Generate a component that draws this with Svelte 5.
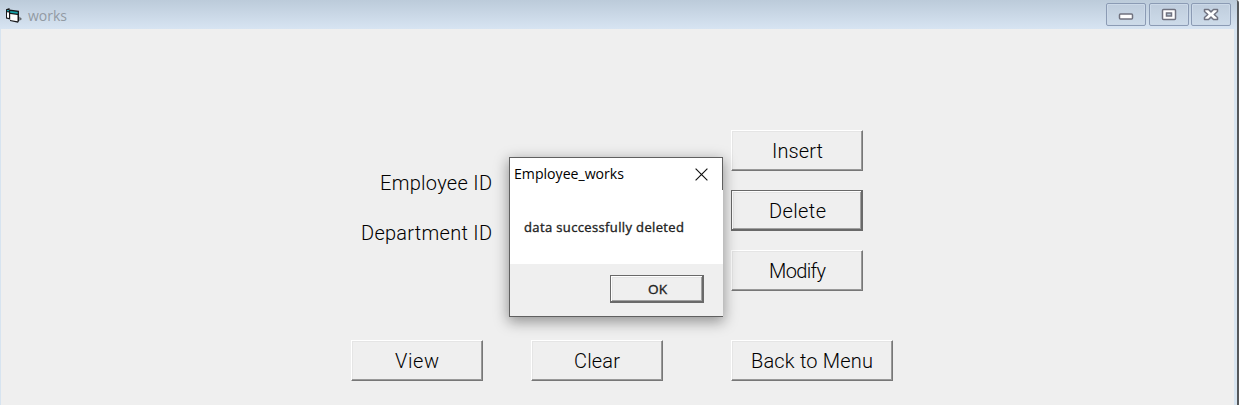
<script>
  const labels = [
    { text: 'Employee ID', width: 112 },
    { text: 'Department ID', width: 131 }
  ];
  const actions = [
    { text: 'Insert', width: 51 },
    { text: 'Delete', width: 57, active: true },
    { text: 'Modify', width: 57 }
  ];
  const footer = [
    { text: 'View', width: 44 },
    { text: 'Clear', width: 46 },
    { text: 'Back to Menu', width: 122, wide: true }
  ];
</script>

{#snippet caption(text, width)}
  <svg class="caption" width={width} height="26" viewBox={`0 0 ${width} 26`}>
    <text x="0" y="20" textLength={width}>{text}</text>
  </svg>
{/snippet}

<div class="window">
  <header>
    <svg class="app-icon" width="18" height="16" viewBox="0 0 18 16">
      <path d="M1 1.200 4.500 0v1.500L14 2.800V13l-1 1.800-8-1.700v-1.500L1 10.500z" fill="#18191b" />
      <path d="M2 4.200 4 4.600v5.500L2 9.500zM5.200 6l7.300 1v6.300L5.200 12z" fill="#fff" />
      <path d="M2 2h2v1.200H2zM5.200 3l7.500 1v1.700l-7.500-1z" fill="#16a7ad" />
      <path d="M14.300 8.500 17 11l-2.700 2z" fill="#63676c" />
    </svg>
    <span class="title">works</span>
    <div class="controls">
      <button aria-label="Minimize">
        <svg width="38" height="21" viewBox="0 0 38 21"><rect x="12.500" y="10" width="13" height="5" rx="1" fill="#fff" stroke="#70727f" stroke-width="1.500" /></svg>
      </button>
      <button aria-label="Maximize">
        <svg width="38" height="21" viewBox="0 0 38 21"><rect x="12.500" y="5.500" width="13" height="10" rx="1" fill="#fff" stroke="#70727f" stroke-width="1.500" /><rect x="16.500" y="9" width="5" height="3" fill="#b8c9d9" stroke="#70727f" stroke-width="1.500" /></svg>
      </button>
      <button aria-label="Close">
        <svg width="38" height="21" viewBox="0 0 38 21"><path d="M12.500 5.500h4l2.500 2.400 2.500-2.400h4v2l-3.300 3 3.300 3v2h-4L19 13.100l-2.500 2.400h-4v-2l3.300-3-3.300-3z" fill="#fff" stroke="#70727f" stroke-width="1.500" stroke-linejoin="round" /></svg>
      </button>
    </div>
  </header>
  <main>
    <section class="upper">
      <div class="labels">
        {#each labels as item}{@render caption(item.text, item.width)}{/each}
      </div>
      <div class="actions">
        {#each actions as item}
          <button class="key" class:active={item.active}>{@render caption(item.text, item.width)}</button>
        {/each}
      </div>
    </section>
    <section class="lower">
      {#each footer as item}
        <button class="key" class:wide={item.wide}>{@render caption(item.text, item.width)}</button>
      {/each}
    </section>
  </main>
</div>

<div class="dialog" role="dialog" aria-label="Employee_works">
  <div class="heading">
    <svg width="114" height="24" viewBox="0 0 114 24"><text x="0" y="17" textLength="110" lengthAdjust="spacingAndGlyphs">Employee_works</text></svg>
    <svg class="cross" width="13" height="13" viewBox="0 0 13 13"><path d="M.6.6 12.400 12.400M12.400.6.6 12.400" stroke="#111" stroke-width="1.15" /></svg>
  </div>
  <div class="message">
    <svg width="164" height="22" viewBox="0 0 164 22"><text x="0" y="15" textLength="160">data successfully deleted</text></svg>
  </div>
  <div class="dialog-footer">
    <button class="key active ok"><svg width="19" height="18" viewBox="0 0 19 18"><text x="0" y="13.500" textLength="19" lengthAdjust="spacingAndGlyphs">OK</text></svg></button>
  </div>
</div>

<style>
  :global(body) { margin: 0; overflow: hidden; background: #fff; }
  * { box-sizing: border-box; }
  button { padding: 0; margin: 0; border-radius: 0; }
  svg { display: block; flex: none; overflow: visible; }
  .window {
    width: 1239px; height: 405px;
    border-right: 2px solid #55585b;
    border-top-right-radius: 3px;
    background: #d7e4f0;
    overflow: hidden;
  }
  header {
    height: 29px; display: flex; align-items: flex-start;
    padding: 3px 6px 0 5px;
    background: linear-gradient(#bccbda, #d7e4f2);
  }
  .app-icon { margin-top: 5px; }
  .title { margin: 4px 0 0 5px; color: #929aa3; font: 14px/18px "Open Sans", "Noto Sans", sans-serif; }
  .controls { display: flex; gap: 3px; margin-left: auto; }
  .controls button {
    width: 40px; height: 23px;
    border: 1px solid #8b9bb4; border-radius: 2px;
    box-shadow: inset 0 0 0 1px #ccd9e8;
    background: linear-gradient(#bfcddd, #cddbe9);
  }
  .controls button:last-child { margin-left: -1px; }
  main {
    width: 1233px; height: 376px; margin-left: 1px;
    background: #efefef; padding-top: 101px;
  }
  .upper { display: flex; height: 210px; }
  .labels {
    width: 491px; display: flex; flex-direction: column;
    align-items: flex-end; gap: 24px; padding-top: 40px;
  }
  .actions { display: flex; flex-direction: column; gap: 19px; margin-left: 239px; }
  .lower { display: flex; padding-left: 350px; gap: 48px; }
  .lower .wide { width: 162px; margin-left: 20px; }
  .caption text { font: 300 20px Roboto, sans-serif; fill: #000; }
  .key {
    display: flex; align-items: center; justify-content: center;
    width: 132px; height: 41px;
    background: #efefef; border: 1px solid;
    border-color: #fff #777 #777 #fff;
    box-shadow: inset -1px -1px #999, inset 1px 1px #e5e5e5;
  }
  .key.active {
    border-color: #696969;
    box-shadow: inset -1px -1px #696969, inset 1px 1px #fff, inset -2px -2px #a0a0a0, inset 2px 2px #e5e5e5;
  }
  .key .caption { margin-top: -1px; transform: translateY(.5px); }
  .dialog {
    position: absolute; left: 509px; top: 157px;
    width: 214px; height: 160px;
    border: 1px solid #606060; border-right: 0;
    background: #fff;
    box-shadow: 0 4px 13px 1px rgba(0, 0, 0, .38);
  }
  .heading { height: 32px; display: flex; justify-content: space-between; padding: 4px 14px 0 4px; border-right: 1px solid #606060; }
  .heading text { font: 15px "Open Sans", "Noto Sans", sans-serif; fill: #000; }
  .cross { margin-top: 6px; }
  .message { height: 74px; padding: 27px 0 0 14px; }
  .message text, .ok text { font: 13px "Open Sans", "Noto Sans", sans-serif; fill: #222; stroke: #222; stroke-width: .35px; }
  .dialog-footer { height: 52px; padding: 11px 19px 0 0; display: flex; justify-content: flex-end; background: #efefef; }
  .dialog .ok { width: 94px; height: 28px; }
</style>
